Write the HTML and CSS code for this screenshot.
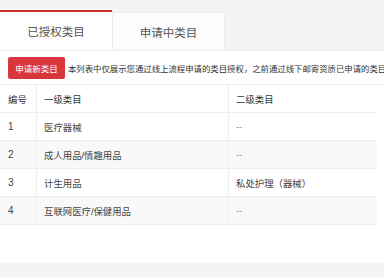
FILE: index.html
```html
<!DOCTYPE html>
<html lang="zh-CN">
<head>
    <meta charset="UTF-8">
    <title>类目管理</title>
    <link rel="stylesheet" href="styles.css">
</head>
<body>
<div id="main">
    <div class="tabs">
        <a class="tab active">已授权类目</a>
        <a class="tab">申请中类目</a>
    </div>
    <div class="panel">
        <div class="toolbar">
            <button class="btn">申请新类目</button>
            <span class="tip">本列表中仅展示您通过线上流程申请的类目授权，之前通过线下邮寄资质已申请的类目</span>
        </div>
        <table>
            <tr>
                <th class="col-no">编号</th>
                <th class="col-first">一级类目</th>
                <th>二级类目</th>
            </tr>
            <tr>
                <td>1</td>
                <td>医疗器械</td>
                <td class="dash">--</td>
            </tr>
            <tr class="odd">
                <td>2</td>
                <td>成人用品/情趣用品</td>
                <td class="dash">--</td>
            </tr>
            <tr>
                <td>3</td>
                <td>计生用品</td>
                <td>私处护理（器械）</td>
            </tr>
            <tr class="odd">
                <td>4</td>
                <td>互联网医疗/保健用品</td>
                <td class="dash">--</td>
            </tr>
        </table>
    </div>
</div>
</body>
</html>
```

FILE: styles.css
```css
body {
    margin: 0;
    background-color: #f4f4f4;
    font-family: "Liberation Sans", "Noto Sans CJK SC", sans-serif;
    color: #444;
}

#main {
    padding-top: 10px;
    height: 277px;
    box-sizing: border-box;
}

.tabs {
    display: flex;
    height: 40px;
}

.tab {
    width: 112px;
    display: flex;
    align-items: center;
    justify-content: center;
    font-size: 11.5px;
    color: #555;
    cursor: pointer;
    box-sizing: border-box;
}

.tab.active {
    background-color: #fff;
    border-top: 2px solid #c8302c;
}

.tab + .tab {
    width: 113px;
    margin-top: 2px;
    background-color: #fcfcfc;
    border: 1px solid #ececec;
    border-bottom: none;
}

.panel {
    background-color: #fff;
    border-top: 1px solid #ececec;
    height: 212px;
    overflow: hidden;
}

.toolbar {
    display: flex;
    align-items: center;
    gap: 3px;
    padding: 6px 0 5px 8px;
    white-space: nowrap;
    overflow: hidden;
    border-bottom: 1px solid #ececec;
}

.btn {
    width: 57px;
    height: 22px;
    padding: 0;
    border: none;
    border-radius: 2px;
    background-color: #d9363b;
    color: #fff;
    font-family: inherit;
    font-size: 8.5px;
    flex-shrink: 0;
}

.tip {
    font-size: 8.4px;
    color: #333;
}

table {
    border-collapse: collapse;
    width: 377px;
    font-size: 9.4px;
}

table tr th, table tr td {
    text-align: left;
    font-weight: normal;
    height: 27px;
    padding: 0 6px 0 7px;
    border-bottom: 1px solid #eeeeee;
    color: #444;
}

table tr th {
    color: #333;
}

table tr th + th, table tr td + td {
    border-left: 1px solid #eeeeee;
}

.col-no {
    width: 22px;
    padding-left: 8px;
}

table tr td:first-child {
    padding-left: 8px;
    font-size: 10px;
}

.col-first {
    width: 178px;
}

tr.odd td {
    background-color: #f9f9f9;
}

.dash {
    color: #888;
}
```
